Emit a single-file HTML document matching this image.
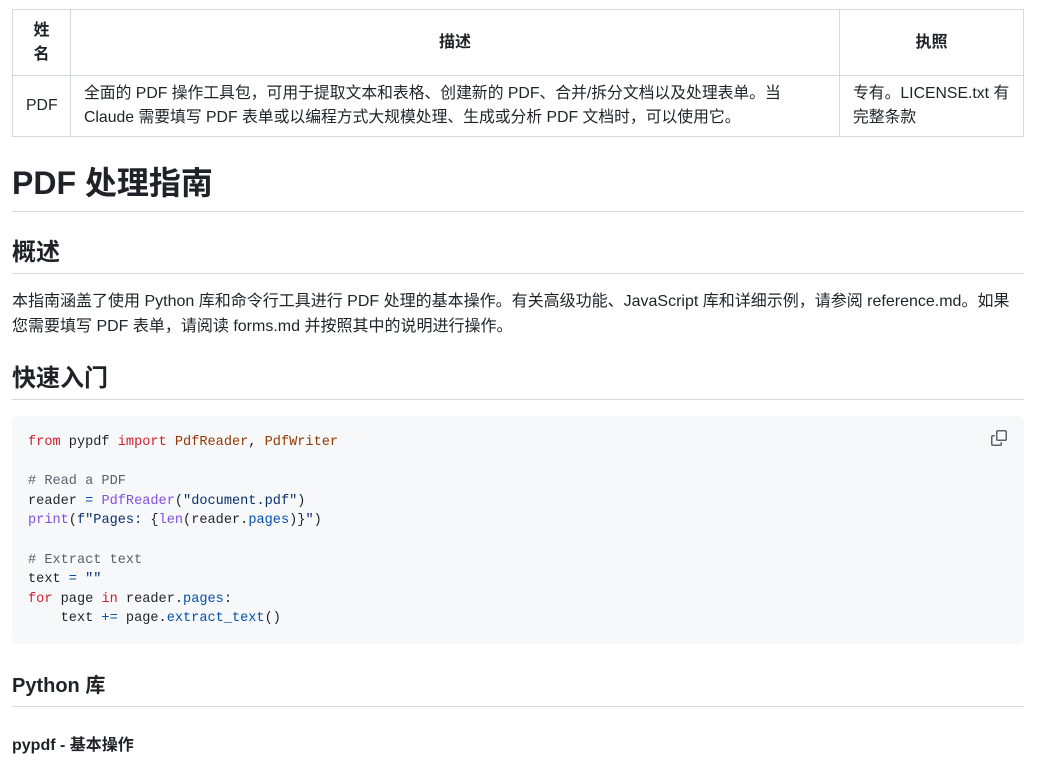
<!DOCTYPE html>
<html><head><meta charset="utf-8"><style>
*{box-sizing:border-box}
body{margin:0;background:#fff;color:#1f2328;font-family:"Liberation Sans","Noto Sans CJK SC",sans-serif;font-size:16px;line-height:1.5}
.w{position:absolute;left:12px;width:1012px;top:9px}
table{border-collapse:collapse;width:1012px;font-size:16px;table-layout:fixed}
th,td{border:1px solid #d1d9e0;padding:6px 13px;line-height:24px}
th{font-weight:600;text-align:center}
td{font-size:15.8px;white-space:nowrap;overflow:hidden}
h1{font-size:32px;font-weight:600;margin:0;padding-bottom:6px;border-bottom:1px solid #d1d9e0;line-height:40px;position:absolute;top:154px;left:0;right:0;height:49px}
h2{font-size:24px;font-weight:600;margin:0;border-bottom:1px solid #d1d9e0;position:absolute;left:0;right:0;line-height:30px}
h3{font-size:20px;font-weight:600;margin:0;border-bottom:1px solid #d1d9e0;position:absolute;left:0;right:0;line-height:25px}
h4{font-size:16px;font-weight:600;margin:0;position:absolute;left:0;line-height:20px}
p{margin:0;position:absolute;left:0;right:0;font-size:16px;line-height:25px;white-space:nowrap}
pre{position:absolute;left:0;right:0;top:407px;height:228px;margin:0;background:#f6f8fa;border-radius:6px;padding:17px 16px;font-family:"Liberation Mono",monospace;font-size:13.6px;line-height:19.6px;color:#1f2328}
.k{color:#cf222e}.c{color:#59636e}.t{color:#953800}.f{color:#8250df}.s{color:#0a3069}.b{color:#0550ae}
</style></head><body>
<div class="w">
<table>
<colgroup><col style="width:58px"><col style="width:769px"><col></colgroup>
<tr style="height:66px"><th>姓<br>名</th><th>描述</th><th>执照</th></tr>
<tr style="height:61px"><td style="text-align:center">PDF</td><td>全面的 PDF 操作工具包，可用于提取文本和表格、创建新的 PDF、合并/拆分文档以及处理表单。当<br>Claude 需要填写 PDF 表单或以编程方式大规模处理、生成或分析 PDF 文档时，可以使用它。</td><td>专有。LICENSE.txt 有<br>完整条款</td></tr>
</table>
<h1>PDF 处理指南</h1>
<h2 style="top:229px;height:36px">概述</h2>
<p style="top:280px">本指南涵盖了使用 Python 库和命令行工具进行 PDF 处理的基本操作。有关高级功能、JavaScript 库和详细示例，请参阅 reference.md。如果<br>您需要填写 PDF 表单，请阅读 forms.md 并按照其中的说明进行操作。</p>
<h2 style="top:355px;height:36px">快速入门</h2>
<pre><span class="k">from</span> pypdf <span class="k">import</span> <span class="t">PdfReader</span>, <span class="t">PdfWriter</span>

<span class="c"># Read a PDF</span>
reader <span class="b">=</span> <span class="f">PdfReader</span>(<span class="s">"document.pdf"</span>)
<span class="f">print</span>(<span class="s">f"Pages: </span>{<span class="f">len</span>(reader.<span class="b">pages</span>)}<span class="s">"</span>)

<span class="c"># Extract text</span>
text <span class="b">=</span> <span class="s">""</span>
<span class="k">for</span> page <span class="k">in</span> reader.<span class="b">pages</span>:
    text <span class="b">+=</span> page.<span class="b">extract_text</span>()</pre>
<svg style="position:absolute;left:979px;top:421px" width="16" height="16" viewBox="0 0 16 16" fill="#59636e"><path d="M0 6.75C0 5.784.784 5 1.750 5h1.5a.75.75 0 0 1 0 1.5h-1.5a.25.25 0 0 0-.25.25v7.5c0 .138.112.25.25.25h7.5a.25.25 0 0 0 .25-.25v-1.5a.75.75 0 0 1 1.5 0v1.5A1.75 1.75 0 0 1 9.25 16h-7.5A1.75 1.75 0 0 1 0 14.250Z"/><path d="M5 1.75C5 .784 5.784 0 6.75 0h7.5C15.216 0 16 .784 16 1.75v7.5A1.75 1.75 0 0 1 14.25 11h-7.5A1.75 1.75 0 0 1 5 9.25Zm1.75-.25a.25.25 0 0 0-.25.25v7.5c0 .138.112.25.25.25h7.5a.25.25 0 0 0 .25-.25v-7.5a.25.25 0 0 0-.25-.25Z"/></svg>
<h3 style="top:665px;height:33px">Python 库</h3>
<h4 style="top:727px">pypdf - 基本操作</h4>
</div>
</body></html>
